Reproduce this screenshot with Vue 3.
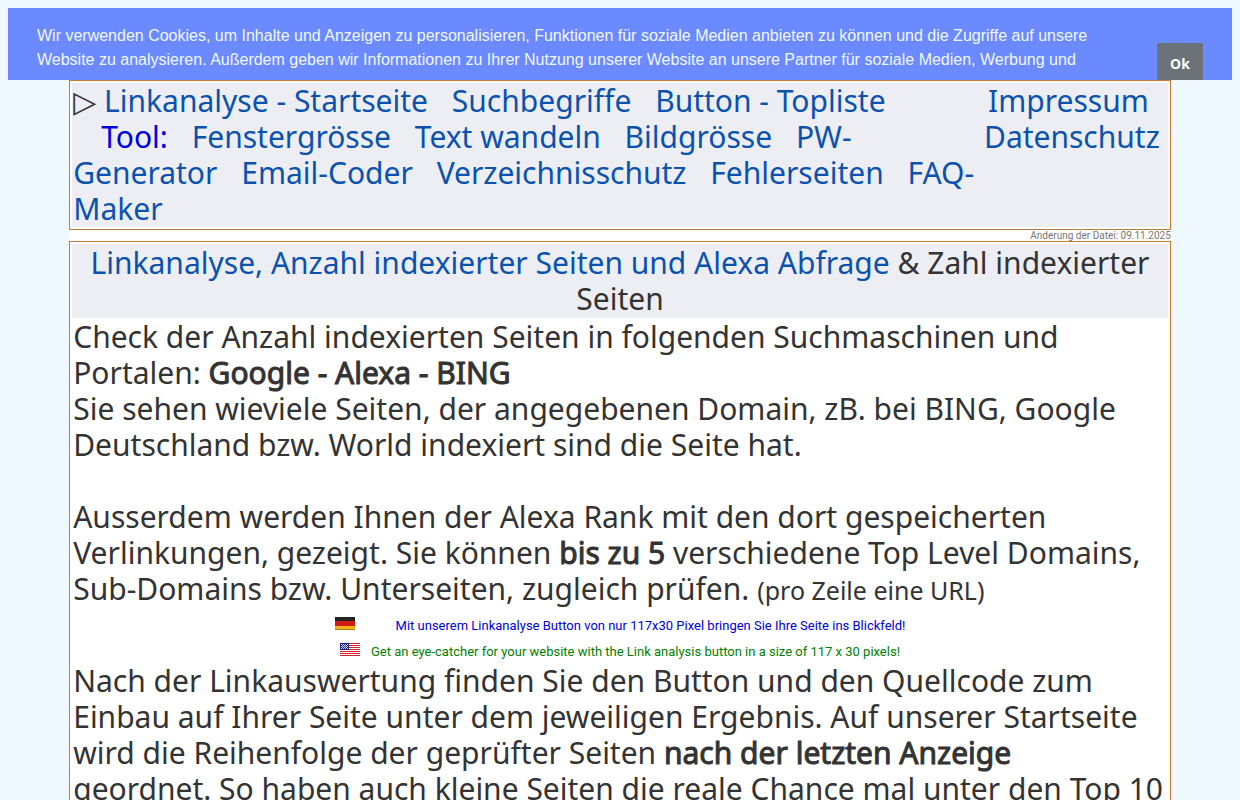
<script setup>
const tools = [
  ['Fenstergrösse'], ['Text wandeln'], ['Bildgrösse'], ['PW-', 'Generator'],
  ['Email-Coder'], ['Verzeichnisschutz'], ['Fehlerseiten'], ['FAQ-', 'Maker'],
]
</script>

<template>
  <div class="page">
    <div class="cookie">
      <p>
        Wir verwenden Cookies, um Inhalte und Anzeigen zu personalisieren, Funktionen für soziale Medien anbieten zu können und die Zugriffe auf unsere<br>
        Website zu analysieren. Außerdem geben wir Informationen zu Ihrer Nutzung unserer Website an unsere Partner für soziale Medien, Werbung und
      </p>
      <button type="button">Ok</button>
    </div>

    <div class="content">
      <header class="box head">
        <nav class="menu">
          <span class="arrow">▷</span>{{ ' ' }}
          <a href="#">Linkanalyse - Startseite</a>{{ ' ' }}
          <a href="#">Suchbegriffe</a>{{ ' ' }}
          <a href="#">Button - Topliste</a><br>
          <span class="tool">Tool:</span>{{ ' ' }}
          <template v-for="t in tools" :key="t[0]">
            <a href="#">{{ t[0] }}<template v-if="t[1]"><br>{{ t[1] }}</template></a>{{ ' ' }}
          </template>
        </nav>
        <nav class="legal">
          <a class="imprint" href="#">Impressum</a>
          <a href="#">Datenschutz</a>
        </nav>
      </header>

      <div class="date">Änderung der Datei: 09.11.2025</div>

      <main class="box">
        <h1>
          <a href="#">Linkanalyse, Anzahl indexierter Seiten und Alexa Abfrage</a> &amp; Zahl indexierter<br>Seiten
        </h1>
        <p class="text">
          Check der Anzahl indexierten Seiten in folgenden Suchmaschinen und<br>
          Portalen: <b>Google - Alexa - BING</b><br>
          Sie sehen wieviele Seiten, der angegebenen Domain, zB. bei BING, Google<br>
          Deutschland bzw. World indexiert sind die Seite hat.<br>
          <br>
          Ausserdem werden Ihnen der Alexa Rank mit den dort gespeicherten<br>
          Verlinkungen, gezeigt. Sie können <b>bis zu 5</b> verschiedene Top Level Domains,<br>
          Sub-Domains bzw. Unterseiten, zugleich prüfen. <small>(pro Zeile eine URL)</small>
        </p>
        <div class="hints">
          <div class="hint de">
            <svg width="20" height="13" viewBox="0 0 20 13" shape-rendering="crispEdges" aria-hidden="true">
              <rect width="20" height="13" fill="#222" />
              <rect y="4" width="20" height="5" fill="#d31a10" />
              <rect y="9" width="20" height="3" fill="#fbb414" />
              <rect y="12" width="20" height="1" fill="#a87a20" />
            </svg>
            <span>Mit unserem Linkanalyse Button von nur 117x30 Pixel bringen Sie Ihre Seite ins Blickfeld!</span>
          </div>
          <div class="hint en">
            <svg width="20" height="13" viewBox="0 0 20 13" shape-rendering="crispEdges" aria-hidden="true">
              <rect width="20" height="13" fill="#fff" />
              <path d="M0 0h20v1H0zM0 2h20v1H0zM0 4h20v1H0zM0 6h20v1H0zM0 8h20v1H0zM0 10h20v1H0zM0 12h20v1H0z" fill="#d8202c" />
              <rect width="9" height="7" fill="#1c1c80" />
              <path d="M1 1h1v1H1zM3 1h1v1H3zM5 1h1v1H5zM7 1h1v1H7zM2 2h1v1H2zM4 2h1v1H4zM6 2h1v1H6zM1 3h1v1H1zM3 3h1v1H3zM5 3h1v1H5zM7 3h1v1H7zM2 4h1v1H2zM4 4h1v1H4zM6 4h1v1H6zM1 5h1v1H1zM3 5h1v1H3zM5 5h1v1H5zM7 5h1v1H7z" fill="#e4e6f6" />
            </svg>
            <span>Get an eye-catcher for your website with the Link analysis button in a size of 117 x 30 pixels!</span>
          </div>
        </div>
        <p class="text after">
          Nach der Linkauswertung finden Sie den Button und den Quellcode zum<br>
          Einbau auf Ihrer Seite unter dem jeweiligen Ergebnis. Auf unserer Startseite<br>
          wird die Reihenfolge der geprüfter Seiten <b>nach der letzten Anzeige</b><br>
          geordnet. So haben auch kleine Seiten die reale Chance mal unter den Top 10
        </p>
      </main>
    </div>
  </div>
</template>

<style>
html, body { height: 100%; margin: 0; overflow: hidden; background: #f0f8ff; }
</style>

<style scoped>
.page {
  padding: 8px 8px 0;
  color: #333;
  font: 30px/36px "Noto Sans", "Open Sans", sans-serif;
  white-space: nowrap;
}
a { color: #0b52af; text-decoration: none; }
p, h1 { margin: 0; font-weight: 400; font-size: inherit; }
.cookie {
  box-sizing: border-box;
  height: 72px;
  overflow: hidden;
  display: flex;
  justify-content: space-between;
  align-items: flex-start;
  padding: 16px 29px 0;
  background: #6c8aff;
}
.cookie p { color: #f0f8ff; font: 16px/24px "Liberation Sans", Arial, sans-serif; }
.cookie button {
  margin-top: 19px;
  width: 46px;
  height: 40px;
  padding: 0;
  border: 0;
  background: #6b7278;
  color: #fff;
  font: bold 14px "Noto Sans", sans-serif;
}
.content { width: 90%; margin: 0 auto; background: #fff; }
.box { border: 1px solid #cc7a33; padding: 2px; }
.head { display: grid; grid-template-columns: 1fr auto; }
.menu, .legal, h1 { background: #eceef4; }
.menu { padding: 0 1px; }
.menu a, .tool { margin-right: 16px; }
.arrow { font-family: "DejaVu Sans", sans-serif; line-height: 1; }
.tool { margin-left: 28px; color: #0000e0; }
.legal { display: flex; flex-direction: column; padding: 0 8px; text-align: center; }
.imprint { padding-right: 7px; }
.date { height: 11px; color: #777; font: 10px/11px Roboto, sans-serif; text-align: right; }
h1 { padding: 1px; text-align: center; }
.text { padding: 1px 1px 0; }
.after { padding-top: 0; }
b { font-weight: 400; -webkit-text-stroke: 1px #333; }
small { font-size: 25px; line-height: 1; }
.hints { display: grid; gap: 4px; padding-top: 8px; font: 13px/22px Roboto, sans-serif; }
.hint { display: flex; justify-content: center; align-items: center; }
.hint svg { margin-bottom: 6px; }
.de { gap: 41px; color: #0000d8; }
.en { gap: 11px; color: #008000; }
</style>
